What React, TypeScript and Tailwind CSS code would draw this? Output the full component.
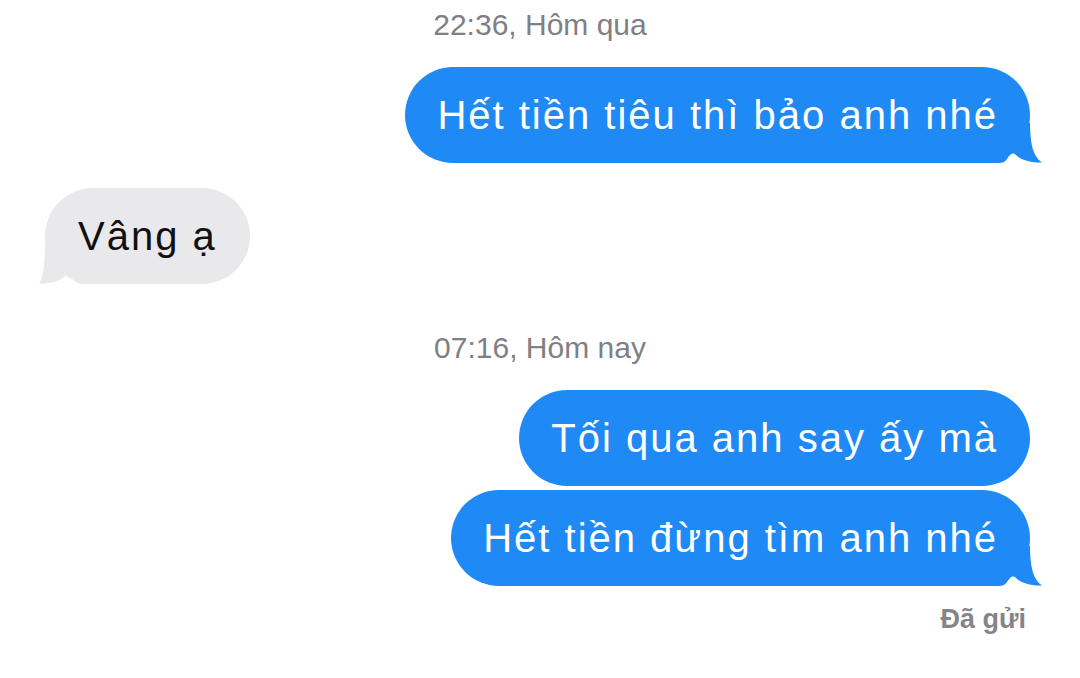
import React from "react";

const BLUE = "#1f8af5";

const TailRight = () => (
  <svg
    className="absolute right-[-12px] bottom-0"
    width="60"
    height="40"
    viewBox="0 0 60 40"
  >
    <path
      d="M0 0 H48 C48 20 51 34 60 39.5 C50 40 39 37 34 32 C31 29 28 31 25 36 C23 39 20 40 17 40 H0 Z"
      fill={BLUE}
    />
  </svg>
);

const TailLeft = () => (
  <svg
    className="absolute left-[-6px] bottom-0"
    width="60"
    height="40"
    viewBox="0 0 60 40"
  >
    <path
      d="M60 0 H6 C6 20 4 34 0 39.5 C10 40 21 37 26 32 C29 29 32 31 35 36 C37 39 40 40 43 40 H60 Z"
      fill="#e9e9eb"
    />
  </svg>
);

const Sent = ({ text, tail, className }: { text: string; tail?: boolean; className?: string }) => (
  <div
    className={
      "relative self-end mr-[50px] h-[96px] flex items-center px-[32px] rounded-[48px] bg-[#1f8af5] text-white text-[40px] tracking-[2px] " +
      (className || "")
    }
  >
    <span className="relative z-10">{text}</span>
    {tail && <TailRight />}
  </div>
);

export default function App() {
  return (
    <div className="w-[1080px] h-[678px] bg-white overflow-hidden flex flex-col font-['Liberation_Sans',Arial,sans-serif]">
      <div className="pt-[7px] text-center text-[30px] leading-[36px] text-[#808084]">22:36, Hôm qua</div>

      <Sent className="mt-[24px]" text="Hết tiền tiêu thì bảo anh nhé" tail />

      <div className="relative self-start ml-[45px] mt-[25px] h-[96px] flex items-center px-[33px] rounded-[48px] bg-[#e9e9eb] text-[#111] text-[40px] tracking-[2px]">
        <span className="relative z-10">Vâng ạ</span>
        <TailLeft />
      </div>

      <div className="mt-[46px] text-center text-[30px] leading-[36px] text-[#808084]">07:16, Hôm nay</div>

      <Sent className="mt-[24px]" text="Tối qua anh say ấy mà" />
      <Sent className="mt-[4px]" text="Hết tiền đừng tìm anh nhé" tail />

      <div className="self-end mr-[54px] mt-[17px] text-[27px] leading-[32px] font-semibold text-[#858589]">Đã gửi</div>
    </div>
  );
}
